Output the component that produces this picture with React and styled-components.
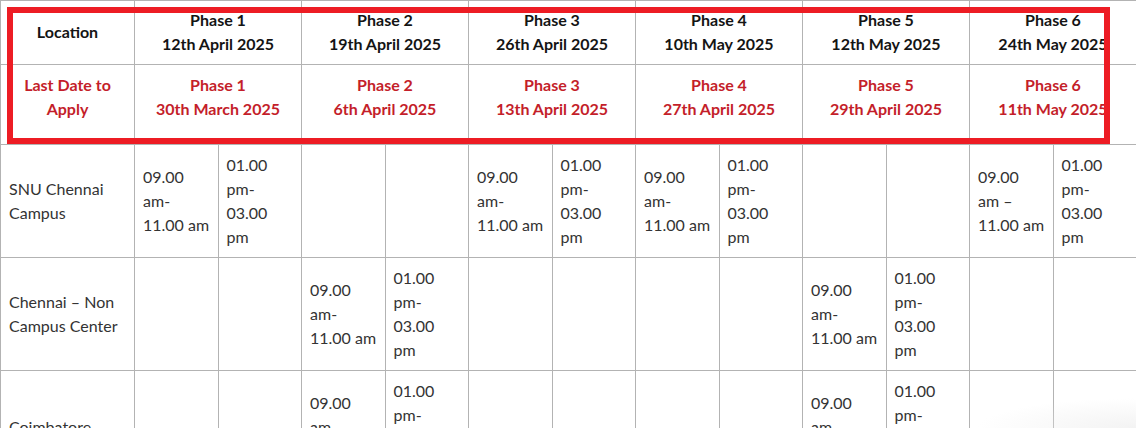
import React from "react";
import styled, { createGlobalStyle } from "styled-components";

const Global = createGlobalStyle`
  html, body { margin: 0; padding: 0; background: #fff; }
  body { overflow: hidden; width: 1136px; height: 428px; }
  #root { width: 1136px; height: 428px; overflow: hidden; }
`;

const Wrap = styled.div`
  position: relative;
  width: 1136px;
  height: 428px;
  overflow: hidden;
  font-family: "Lato", "Noto Sans", sans-serif;
`;

const Table = styled.table`
  border-collapse: collapse;
  table-layout: fixed;
  width: 1137px;
  font-size: 16px;
  line-height: 24px;
`;

const HeadCell = styled.th`
  border: 1px solid #b3b3b3;
  text-align: center;
  vertical-align: middle;
  font-weight: 700;
  color: ${(p) => (p.$red ? "#c41e2a" : "#141414")};
  padding: ${(p) => (p.$red ? "8px 8px 23px" : "7px 8px 8px")};
`;

const Cell = styled.td`
  border: 1px solid #b3b3b3;
  vertical-align: middle;
  text-align: left;
  color: #333;
  padding: 8px;
  font-weight: 400;
`;

const Highlight = styled.div`
  position: absolute;
  left: 7px;
  top: 7px;
  width: 1103px;
  height: 137px;
  box-sizing: border-box;
  border: 6px solid #ed1c24;
  pointer-events: none;
`;

const Fade = styled.div`
  position: absolute;
  right: 0;
  bottom: 0;
  width: 160px;
  height: 30px;
  background: radial-gradient(ellipse at 100% 100%, rgba(235,235,235,0.6), rgba(255,255,255,0) 70%);
  pointer-events: none;
`;

const phases = [
  { n: 1, exam: "12th April 2025", last: "30th March 2025" },
  { n: 2, exam: "19th April 2025", last: "6th April 2025" },
  { n: 3, exam: "26th April 2025", last: "13th April 2025" },
  { n: 4, exam: "10th May 2025", last: "27th April 2025" },
  { n: 5, exam: "12th May 2025", last: "29th April 2025" },
  { n: 6, exam: "24th May 2025", last: "11th May 2025" },
];

const Morning = ({ dash = "-" }) => (
  <>
    09.00
    <br />
    am{dash === "-" ? "-" : " –"}
    <br />
    11.00 am
  </>
);

const Afternoon = () => (
  <>
    01.00
    <br />
    pm-
    <br />
    03.00
    <br />
    pm
  </>
);

const rows = [
  { loc: ["SNU Chennai", "Campus"], active: [1, 3, 4, 6] },
  { loc: ["Chennai – Non", "Campus Center"], active: [2, 5] },
  { loc: ["Coimbatore"], active: [2, 5] },
];

export default function App() {
  return (
    <>
      <Global />
      <Wrap>
        <Table>
          <colgroup>
            <col style={{ width: 134 }} />
            {Array.from({ length: 12 }).map((_, i) => (
              <col key={i} />
            ))}
          </colgroup>
          <thead>
            <tr>
              <HeadCell>Location</HeadCell>
              {phases.map((p) => (
                <HeadCell key={p.n} colSpan={2}>
                  Phase {p.n}
                  <br />
                  {p.exam}
                </HeadCell>
              ))}
            </tr>
            <tr>
              <HeadCell $red>Last Date to Apply</HeadCell>
              {phases.map((p) => (
                <HeadCell $red key={p.n} colSpan={2}>
                  Phase {p.n}
                  <br />
                  {p.last}
                </HeadCell>
              ))}
            </tr>
          </thead>
          <tbody>
            {rows.map((r, ri) => (
              <tr key={ri}>
                <Cell>
                  {r.loc.map((l, i) => (
                    <React.Fragment key={i}>
                      {i > 0 && <br />}
                      {l}
                    </React.Fragment>
                  ))}
                </Cell>
                {phases.map((p) =>
                  r.active.includes(p.n) ? (
                    <React.Fragment key={p.n}>
                      <Cell>
                        <Morning dash={p.n === 6 ? "–" : "-"} />
                      </Cell>
                      <Cell>
                        <Afternoon />
                      </Cell>
                    </React.Fragment>
                  ) : (
                    <React.Fragment key={p.n}>
                      <Cell />
                      <Cell />
                    </React.Fragment>
                  )
                )}
              </tr>
            ))}
          </tbody>
        </Table>
        <Highlight />
        <Fade />
      </Wrap>
    </>
  );
}
